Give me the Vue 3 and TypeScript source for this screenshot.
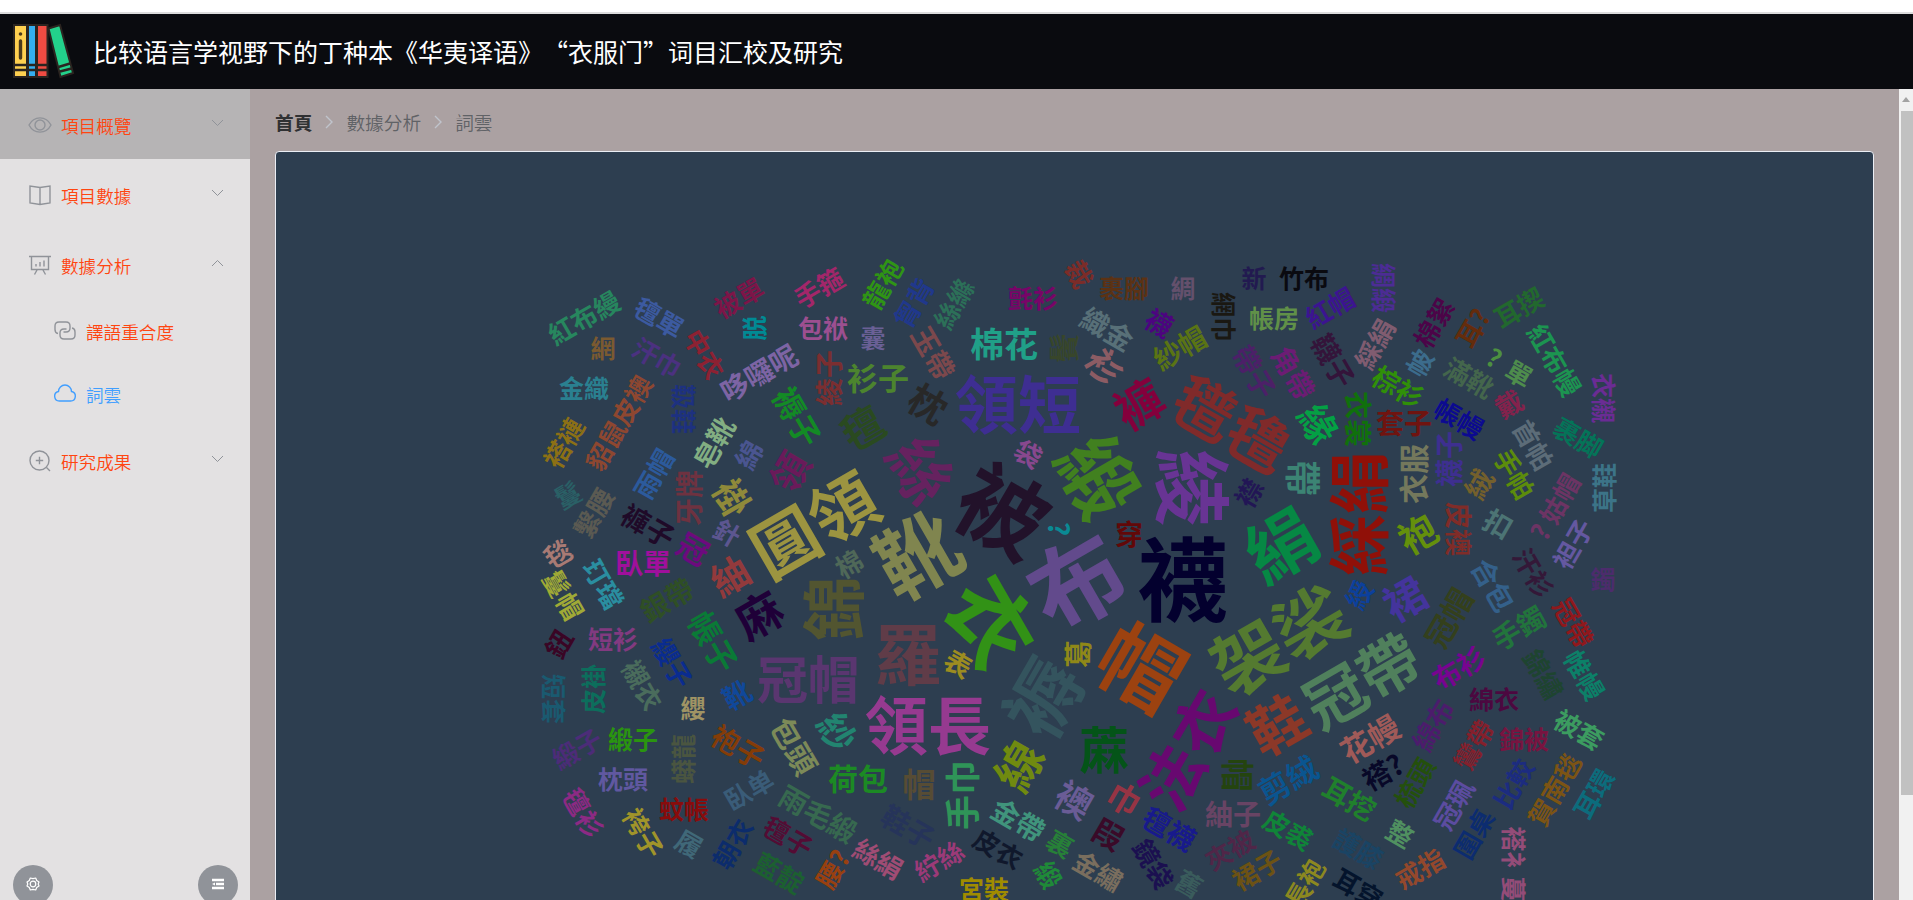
<script setup lang="ts">
interface Word { text: string; x: number; y: number; size: number; angle: number; color: string }

type Row = [string, number, number, number, number, string]

const rows: Row[] = [
  ['襪', 1183, 579, 91, 0, '#03002e'], ['布', 1077, 582, 94, -30, '#624a8c'], ['靴', 918, 555, 82, -30, '#80854f'],
  ['被', 1003, 511, 89, 30, '#22122a'], ['綾', 1192, 488, 78, 90, '#683494'], ['緞', 1098, 477, 78, 60, '#41801f'],
  ['衣', 991, 621, 87, 60, '#329216'], ['帽', 1141, 667, 83, 30, '#9c4210'], ['羅', 908, 655, 67, 0, '#603c48'],
  ['袈裟', 1279, 640, 71, -30, '#547a30'], ['褥', 1044, 698, 74, -60, '#34545e'], ['領長', 928, 725, 63, 0, '#963a90'],
  ['領短', 1018, 404, 63, 0, '#3e2e92'], ['圓領', 814, 525, 67, -30, '#9c9440'], ['錦', 834, 609, 64, -90, '#525530'],
  ['綵絹', 1359, 514, 62, -90, '#901008'], ['絹', 1281, 545, 69, -30, '#068844'], ['法衣', 1188, 750, 63, -60, '#680870'],
  ['氆氇', 1232, 424, 62, 30, '#802a2a'], ['絲', 921, 470, 64, 60, '#66225f'], ['鞋', 1277, 725, 57, -30, '#8c3828'],
  ['冠帶', 1362, 681, 61, -30, '#50805c'], ['冠帽', 808, 680, 51, 0, '#5a3670'], ['蔴', 1104, 750, 50, 0, '#045418'],
  ['褲', 1139, 404, 48, -30, '#84003c'], ['線', 1019, 766, 47, -60, '#708a10'], ['麻', 759, 615, 46, -30, '#1f0038'],
  ['氊', 863, 428, 42, -30, '#2a4a20'], ['裙', 1405, 599, 42, -30, '#44349c'], ['手巾', 963, 795, 35, -90, '#2f9458'],
  ['紬', 730, 576, 38, -30, '#923a3c'], ['領', 790, 472, 39, -60, '#6a1a5a'], ['褂', 732, 498, 36, 60, '#8f8a3a'],
  ['棉花', 1004, 344, 34, 0, '#20a088'], ['衫', 1104, 367, 35, 60, '#8c5c64'], ['枕', 928, 404, 38, 30, '#282828'],
  ['帶', 1303, 478, 36, 90, '#3c8474'], ['袍', 1418, 534, 38, -30, '#64900c'], ['紗', 837, 732, 37, 60, '#228470'],
  ['帽', 919, 784, 33, 0, '#574c34'], ['襖', 1074, 800, 36, 30, '#6a5c96'], ['巾', 1124, 799, 33, 30, '#963444'],
  ['帽', 1238, 775, 33, 90, '#24440f'], ['緣', 1318, 424, 38, 60, '#04a044'], ['鬢', 1064, 348, 30, -90, '#38462a'],
  ['衫子', 878, 378, 31, 0, '#4c842e'], ['帳子', 713, 642, 32, 60, '#0a7a36'], ['褥子', 797, 417, 31, 60, '#138a25'],
  ['包頭', 794, 746, 30, 60, '#7c8a58'], ['荷包', 858, 779, 30, 0, '#1c8a24'], ['剪絨', 1288, 780, 31, -30, '#0a5590'],
  ['花幔', 1370, 739, 31, -30, '#a05a58'], ['衣服', 1414, 474, 30, -90, '#74785c'], ['冠帽', 1449, 618, 31, -60, '#34401c'],
  ['紅布縵', 584, 318, 26, -30, '#27865e'], ['氊單', 659, 318, 26, 30, '#3c5aa0'], ['網', 603, 348, 25, 0, '#7b5a30'],
  ['汗巾', 657, 358, 26, 30, '#4b3180'], ['中衣', 704, 354, 26, 60, '#8d2132'], ['被單', 739, 298, 26, -30, '#7d1548'],
  ['手箍', 819, 288, 26, -30, '#a3266a'], ['龍袍', 883, 284, 26, -60, '#2f9415'], ['脱', 754, 328, 25, -90, '#008a94'],
  ['包袱', 823, 328, 25, 0, '#9c4f90'], ['囊', 873, 338, 25, 0, '#6a6096'], ['哆囉呢', 759, 373, 28, -30, '#7d64a4'],
  ['綾子', 829, 378, 28, -90, '#7b2e30'], ['金織', 584, 388, 25, 0, '#2a8090'], ['貂鼠皮襖', 619, 423, 26, -60, '#8e4730'],
  ['靸鞋', 683, 409, 25, 90, '#1d3180'], ['褡褳', 564, 443, 26, -60, '#8c7015'], ['皂靴', 714, 443, 27, -60, '#82ae82'],
  ['綿', 749, 455, 27, -60, '#4a5590'], ['雨帽', 654, 474, 26, -60, '#2c5a9c'], ['牙牌', 689, 498, 28, -90, '#6e3240'],
  ['鬘', 568, 495, 26, -30, '#2a6066'], ['繫腰', 594, 513, 26, -60, '#5b5a52'], ['褲子', 648, 526, 28, 30, '#1f0a28'],
  ['冠', 693, 549, 31, 30, '#6d0a7e'], ['針', 727, 533, 26, 30, '#5c5690'], ['毯', 558, 554, 27, -30, '#a87a74'],
  ['鬘帽', 563, 595, 26, 60, '#a0aa36'], ['玎璫', 603, 584, 26, 60, '#2a8ea0'], ['臥單', 643, 563, 28, 0, '#a0109c'],
  ['銀帶', 667, 600, 28, -30, '#2f4f25'], ['棉', 849, 564, 27, -30, '#4f6858'], ['鈕', 559, 644, 27, -60, '#3a0525'],
  ['短衫', 613, 639, 25, 0, '#823a80'], ['纓子', 672, 663, 26, 60, '#0a2c90'], ['袋', 1028, 454, 27, 30, '#88488e'],
  ['襟', 1249, 493, 27, -60, '#221655'], ['?', 1059, 529, 28, 90, '#0a8a94'], ['穿', 1129, 534, 28, 0, '#620808'],
  ['表', 958, 664, 27, 30, '#9c8c20'], ['葛', 1078, 654, 28, -90, '#8f8818'], ['金帶', 1018, 820, 28, 30, '#40947c'],
  ['氊襪', 1169, 829, 28, 30, '#181a8c'], ['紬子', 1233, 814, 28, 0, '#684464'], ['叚', 1108, 834, 31, 30, '#3a0a28'],
  ['鞋子', 908, 827, 28, 30, '#26345a'], ['皮衣', 998, 849, 26, 30, '#10182c'], ['裏', 1060, 844, 26, 30, '#278038'],
  ['緞', 1048, 875, 26, 60, '#1f8a38'], ['金繡', 1098, 871, 26, 30, '#7a6e5e'], ['鏡袋', 1153, 864, 26, 60, '#1b1050'],
  ['舊', 1189, 884, 26, 30, '#3a5c5c'], ['夾被', 1230, 850, 26, -30, '#502648'], ['裙子', 1257, 870, 26, -30, '#6c5214'],
  ['宮裝', 984, 889, 25, 0, '#a08c00'], ['紵絲', 939, 861, 26, -30, '#9c3a78'], ['絲絹', 878, 859, 26, 30, '#a04c74'],
  ['腰?', 833, 869, 26, -60, '#984010'], ['藍靛', 779, 873, 26, 30, '#1c6030'], ['氊子', 788, 837, 26, 30, '#540c34'],
  ['雨毛緞', 818, 814, 28, 30, '#37694f'], ['臥单', 749, 790, 26, -30, '#3a5c78'], ['朝衣', 733, 844, 26, -60, '#0c2c6c'],
  ['履', 689, 844, 26, 30, '#406878'], ['蚊帳', 684, 809, 25, 0, '#880c0c'], ['袴子', 643, 833, 26, 60, '#a0942a'],
  ['氊衫', 583, 813, 26, 60, '#8c2a84'], ['枕頭', 623, 779, 25, 0, '#6058a0'], ['緞子', 577, 749, 26, -30, '#4c2c78'],
  ['緞子', 633, 739, 25, 0, '#2a9410'], ['蟒龍', 683, 759, 25, -90, '#4a5540'], ['短套', 553, 699, 25, 90, '#1a5a70'],
  ['皮褂', 593, 689, 25, -90, '#0c6e5c'], ['襯衣', 642, 685, 26, 60, '#4a6c5c'], ['纓', 693, 708, 25, 0, '#a09464'],
  ['靴', 737, 695, 28, -30, '#10489a'], ['袍子', 738, 747, 28, 30, '#843c08'], ['胷背', 914, 303, 26, -60, '#20388c'],
  ['絲縧', 954, 304, 26, -60, '#2c7058'], ['氈衫', 1033, 298, 25, 0, '#780468'], ['裁', 1079, 274, 27, 60, '#7c2c28'],
  ['裹腳', 1124, 288, 25, 0, '#5c3214'], ['綢', 1183, 288, 25, 0, '#64506c'], ['網巾', 1223, 317, 25, 90, '#1a1812'],
  ['新', 1254, 278, 25, 0, '#221a50'], ['織金', 1107, 329, 28, 30, '#587078'], ['襪', 1159, 323, 27, 30, '#4c0480'],
  ['紗帽', 1180, 348, 28, -30, '#5a7414'], ['玉帶', 933, 353, 28, 60, '#7c484c'], ['竹布', 1304, 278, 25, 0, '#0a0a10'],
  ['紅帽', 1330, 308, 26, -30, '#3c1490'], ['綢緞', 1383, 288, 25, 90, '#4c2c94'], ['棉絮', 1434, 323, 26, -60, '#4c0448'],
  ['耳?', 1473, 328, 26, -60, '#642c0c'], ['耳揳', 1519, 308, 26, -30, '#22682e'], ['紅布幔', 1554, 360, 26, 60, '#1c9450'],
  ['帳房', 1274, 318, 25, 0, '#609048'], ['綵絹', 1375, 344, 26, -60, '#805c70'], ['帔', 1420, 363, 26, -60, '#3c6c8c'],
  ['?', 1494, 358, 25, 30, '#4c9040'], ['滿靴', 1469, 378, 26, 30, '#44664c'], ['單', 1519, 374, 26, 30, '#4e8c4c'],
  ['戴', 1509, 404, 27, -30, '#84224c'], ['衣襯', 1603, 398, 25, 90, '#6a2c94'], ['裹脚', 1578, 438, 26, 30, '#047458'],
  ['帳幔', 1459, 419, 26, 30, '#0c0a90'], ['首帕', 1533, 445, 26, 60, '#5c6c78'], ['韈子', 1333, 361, 28, 60, '#34143a'],
  ['帶子', 1254, 372, 28, 60, '#4c2068'], ['角帶', 1293, 373, 28, 60, '#6c1c74'], ['棕衫', 1398, 387, 27, 30, '#309008'],
  ['衣裳', 1358, 419, 28, 90, '#10700c'], ['套子', 1404, 423, 28, 0, '#701410'], ['襪子', 1449, 459, 28, -90, '#3e2f90'],
  ['皮襖', 1458, 529, 27, 90, '#802c28'], ['絨', 1479, 484, 28, -60, '#74602c'], ['手帕', 1514, 474, 26, 60, '#5c8c0c'],
  ['扣', 1498, 524, 28, 30, '#4c7474'], ['? 姑帽', 1555, 507, 26, -60, '#6c3464'], ['草鞋', 1604, 488, 25, -90, '#3c7488'],
  ['袒子', 1573, 544, 26, -60, '#6458a0'], ['汗衫', 1533, 573, 26, 60, '#341838'], ['鐲', 1603, 579, 25, 0, '#4c2c6c'],
  ['合包', 1493, 585, 28, 60, '#34608a'], ['綬', 1359, 595, 27, -60, '#0c409c'], ['手鐲', 1519, 628, 28, -30, '#22743c'],
  ['冠帶', 1573, 623, 26, 60, '#90181c'], ['布衫', 1459, 668, 28, -30, '#780490'], ['綿衣', 1494, 699, 25, 0, '#4c0840'],
  ['錦繡', 1543, 674, 26, 60, '#1e4430'], ['帷幔', 1584, 675, 26, 60, '#0c8068'], ['被套', 1579, 730, 26, 30, '#3c9c60'],
  ['錦被', 1524, 739, 25, 0, '#781440'], ['鸞帶', 1474, 745, 26, -60, '#84202c'], ['綿布', 1433, 725, 27, -60, '#4c1c6c'],
  ['褡?', 1383, 772, 28, -30, '#080828'], ['梳頭', 1415, 783, 26, -60, '#24500c'], ['冠珮', 1454, 805, 26, -60, '#5c4ca0'],
  ['比較', 1514, 784, 26, -60, '#1c2c80'], ['賀南毯', 1555, 790, 26, -60, '#7c5414'], ['耳環', 1594, 794, 26, -60, '#0c6c7c'],
  ['耳挖', 1349, 799, 28, 30, '#20802c'], ['整', 1400, 834, 26, 30, '#509060'], ['皮裘', 1288, 830, 26, 30, '#108438'],
  ['護膝', 1358, 849, 26, 30, '#1a4464'], ['圍桌', 1474, 834, 26, -60, '#0c2c70'], ['戒指', 1420, 869, 26, -30, '#94482c'],
  ['長袍', 1305, 884, 26, -60, '#8c8820'], ['耳穿', 1358, 889, 26, 30, '#04142c'], ['褡衤蔓', 1513, 864, 25, 90, '#944c78'],
]

const words: Word[] = rows.map(([text, x, y, size, angle, color]) => ({ text, x, y, size, angle, color }))

const chevron = 'M1 1 L6.5 6.5 L12 1'
</script>

<template>
  <div class="page">
    <header class="header">
      <svg class="logo" width="64" height="58" viewBox="0 0 64 58">
        <g stroke="#2b2420" stroke-width="2">
          <rect x="2" y="3" width="13" height="52" fill="#ffd050" />
          <rect x="16" y="3" width="8" height="52" fill="#35aef0" />
          <rect x="25" y="3" width="10.500" height="52" fill="#f04b42" />
          <path d="M36.500 6.500 L48 3 L61 51 L48.500 55 Z" fill="#23d18b" />
          <path d="M2 43 H35.500 M2 48 H35.500 M46.500 45 L58 41.500 M48 49.500 L59.500 46.500" fill="none" stroke-width="2.400" />
        </g>
        <circle cx="8.500" cy="12" r="1.800" fill="#4b3a1c" />
        <path d="M8.500 19 V36" stroke="#4b3a1c" stroke-width="3.400" stroke-linecap="round" />
      </svg>
      <h1 class="title">比较语言学视野下的丁种本《华夷译语》“衣服门”词目汇校及研究</h1>
    </header>

    <div class="body">
      <aside class="sidebar">
        <nav>
          <div class="item hovered">
            <svg class="icon" viewBox="0 0 24 24"><path d="M1 12 C6 2.500 18 2.500 23 12 C18 21.500 6 21.500 1 12 Z" /><circle cx="12" cy="12" r="5" /></svg>
            <span>項目概覽</span>
            <svg class="arrow" viewBox="0 0 13 8"><path :d="chevron" /></svg>
          </div>
          <div class="item">
            <svg class="icon" viewBox="0 0 24 24"><path d="M12 4.500 L2 3 V20 L12 21.500 L22 20 V3 Z M12 4.500 V21.500" /></svg>
            <span>項目數據</span>
            <svg class="arrow" viewBox="0 0 13 8"><path :d="chevron" /></svg>
          </div>
          <div class="item">
            <svg class="icon" viewBox="0 0 24 24"><path d="M1 3.500 H23 M3.500 3.500 V16.500 H20.500 V3.500 M9 17 L6.500 21.500 M15 17 L17.500 21.500 M8 11 V13.500 M12 9 V13.500 M16 7.500 V13.500" /></svg>
            <span>數據分析</span>
            <svg class="arrow up" viewBox="0 0 13 8"><path :d="chevron" /></svg>
          </div>
          <div class="item sub">
            <svg class="icon" viewBox="0 0 24 24"><path d="M5 14.500 Q2 14 2 10.500 V7 Q2 3 6 3 H13 Q17 3 17 7 V9 Q17 13 13 13 H10.500" /><path d="M19 9 Q22 9.500 22 13 V16 Q22 20 18 20 H11 Q7 20 7 16 V14 Q7 10 11 10 H13.500" /></svg>
            <span>譯語重合度</span>
          </div>
          <div class="item sub active">
            <svg class="icon" viewBox="0 0 24 24"><path d="M6.500 19 A4.800 4.800 0 0 1 5.500 9.500 A6.500 6.500 0 0 1 18.500 9.500 A4.800 4.800 0 0 1 17.500 19 Z" /></svg>
            <span>詞雲</span>
          </div>
          <div class="item">
            <svg class="icon" viewBox="0 0 24 24"><circle cx="11.500" cy="11.500" r="9.500" /><path d="M18.500 18.500 L22 22 M7.800 11.500 H15.200 M11.500 7.800 V15.200" /></svg>
            <span>研究成果</span>
            <svg class="arrow" viewBox="0 0 13 8"><path :d="chevron" /></svg>
          </div>
        </nav>
        <div class="tools">
          <button class="round">
            <svg width="14" height="14" viewBox="0 0 14 14"><path d="M4.300 1 L7 1.700 L9.700 1 L10.700 3.500 L13 5 L12.200 7 L13 9 L10.700 10.500 L9.700 13 L7 12.300 L4.300 13 L3.300 10.500 L1 9 L1.800 7 L1 5 L3.300 3.500 Z" stroke-linejoin="round" /><circle cx="7" cy="7" r="2.800" /></svg>
          </button>
          <button class="round">
            <svg width="14" height="14" viewBox="0 0 14 14"><path d="M1 3 H13 M5 7 H13 M1 11 H13" stroke-width="2.400" /><path d="M1 7 L4 5.500 V8.500 Z" fill="#fff" stroke="none" /></svg>
          </button>
        </div>
      </aside>

      <main class="main">
        <div class="breadcrumb">
          <b>首頁</b>
          <svg viewBox="0 0 8 14"><path d="M1 1 L7 7 L1 13" /></svg>
          <span>數據分析</span>
          <svg viewBox="0 0 8 14"><path d="M1 1 L7 7 L1 13" /></svg>
          <span>詞雲</span>
        </div>
        <section class="card">
          <svg class="cloud" width="1597" height="748" viewBox="276 152 1597 748">
            <text
              v-for="(w, i) in words"
              :key="i"
              :transform="`translate(${w.x} ${w.y}) rotate(${w.angle})`"
              :y="w.size * 0.38"
              :font-size="w.size"
              :fill="w.color"
            >{{ w.text }}</text>
          </svg>
        </section>
      </main>

      <div class="scrollbar">
        <div class="scroll-up"></div>
        <div class="thumb"></div>
      </div>
    </div>
  </div>
</template>

<style>
body {
  margin: 0;
  overflow: hidden;
}
</style>

<style scoped>
.page {
  height: 900px;
  display: flex;
  flex-direction: column;
  box-sizing: border-box;
  padding-top: 12px;
  background: #fff;
  font-family: "Noto Sans CJK SC", "Noto Sans CJK TC", sans-serif;
  overflow: hidden;
}
.header {
  height: 75px;
  flex: none;
  display: flex;
  align-items: center;
  border-top: 2px solid #dcdcdd;
  background: #0a0b0f;
}
.logo {
  margin: -2px 0 0 12px;
}
.title {
  margin: 0 0 2px 17px;
  color: #fff;
  font-size: 25px;
  font-weight: 400;
  line-height: 36px;
  white-space: nowrap;
  text-spacing-trim: space-all;
}
.body {
  flex: 1;
  min-height: 0;
  display: flex;
}
.sidebar {
  width: 250px;
  flex: none;
  display: flex;
  flex-direction: column;
  justify-content: space-between;
  background: #e3e1e2;
}
.item {
  height: 70px;
  display: flex;
  align-items: center;
  box-sizing: border-box;
  padding: 2px 26px 0 28px;
  color: #ff4510;
  font-size: 17.6px;
  font-weight: 350;
}
.item.hovered {
  background: #b6b4b5;
}
.item.sub {
  height: 63px;
  padding-left: 53px;
}
.item.active {
  color: #409eff;
}
.item span {
  flex: 1;
  margin-left: 9px;
}
.icon {
  width: 24px;
  height: 24px;
  fill: none;
  stroke: #909399;
  stroke-width: 1.4;
  margin-top: -1px;
}
.active .icon {
  stroke: #409eff;
}
.arrow {
  width: 13px;
  height: 8px;
  margin-top: -5px;
  fill: none;
  stroke: #909399;
  stroke-width: 1;
}
.arrow.up {
  transform: rotate(180deg);
}
.tools {
  display: flex;
  justify-content: space-between;
  padding: 0 12px 0 13px;
  margin-bottom: -5px;
}
.round {
  width: 40px;
  height: 40px;
  padding: 0 1px 2px 0;
  border: none;
  border-radius: 50%;
  background: #909399;
  display: flex;
  align-items: center;
  justify-content: center;
}
.round svg {
  fill: none;
  stroke: #fff;
  stroke-width: 1.2;
}
.main {
  flex: 1;
  min-width: 0;
  box-sizing: border-box;
  padding: 0 25px;
  background: #aba1a2;
  overflow: hidden;
}
.breadcrumb {
  height: 62px;
  padding-top: 3px;
  box-sizing: border-box;
  display: flex;
  align-items: center;
  color: #606266;
  font-size: 18.7px;
  font-weight: 350;
}
.breadcrumb b {
  color: #303133;
  font-weight: 700;
}
.breadcrumb svg {
  width: 8px;
  height: 14px;
  margin: 0 13px;
  fill: none;
  stroke: #c0c4cc;
  stroke-width: 1.4;
}
.card {
  height: 900px;
  border: 1px solid #ebeef5;
  border-radius: 4px;
  background: #2d3e50;
  overflow: hidden;
}
.cloud {
  display: block;
}
.cloud text {
  text-anchor: middle;
  font-weight: 700;
}
.scrollbar {
  width: 14px;
  flex: none;
  background: #f1f1f1;
}
.scroll-up {
  width: 0;
  height: 0;
  margin: 8px auto 9px;
  border: 4px solid transparent;
  border-top: 0;
  border-bottom: 5px solid #a3a3a3;
}
.thumb {
  height: 684px;
  margin-left: 2px;
  background: #c1c1c1;
}
</style>
